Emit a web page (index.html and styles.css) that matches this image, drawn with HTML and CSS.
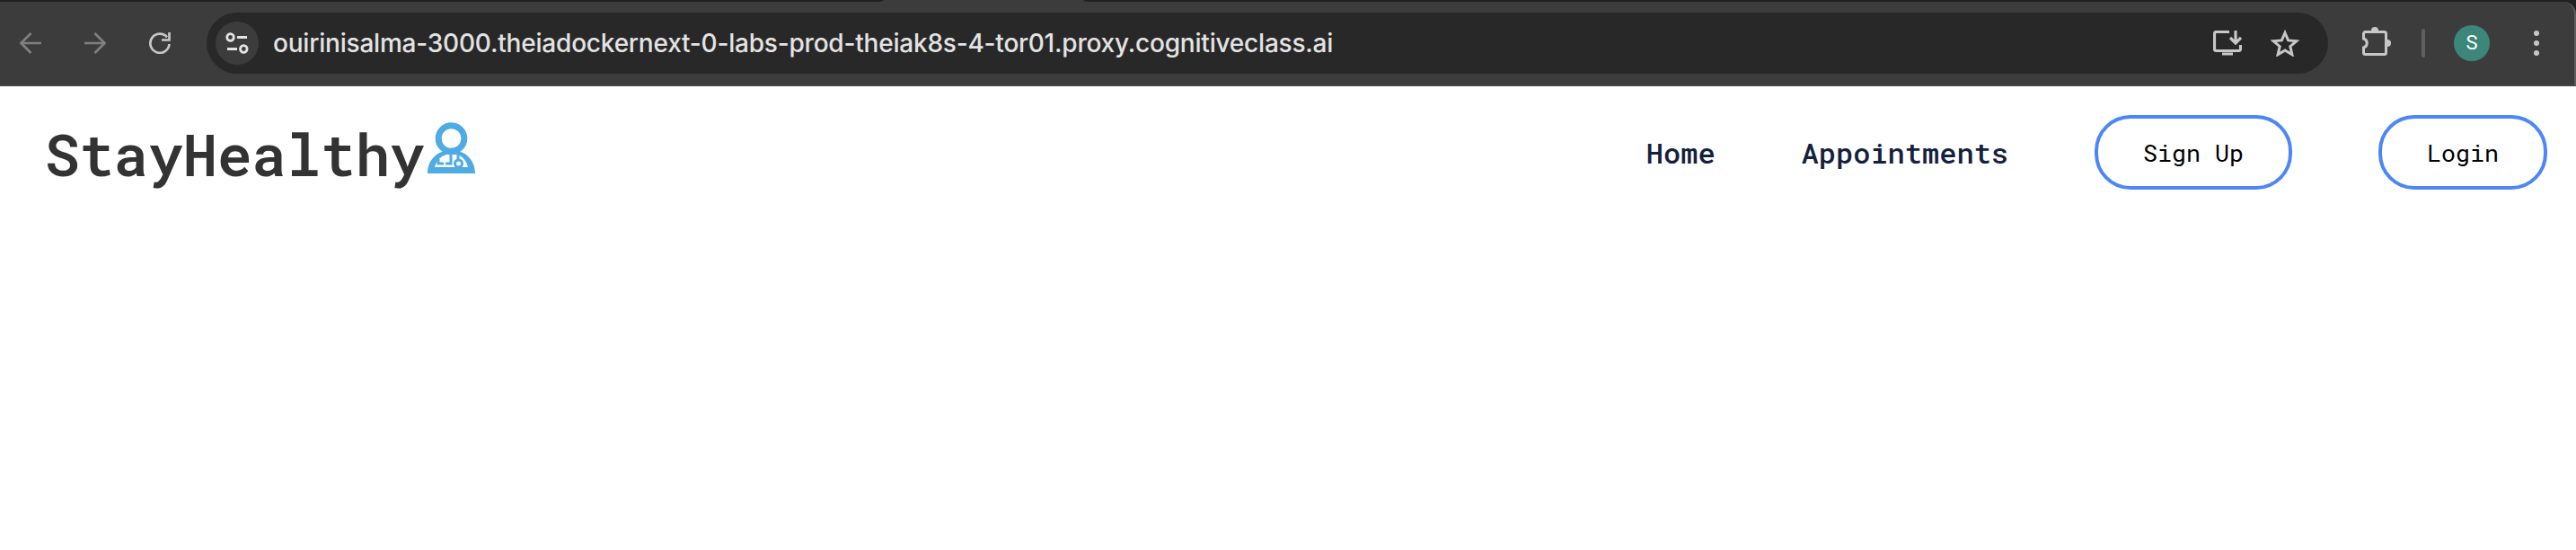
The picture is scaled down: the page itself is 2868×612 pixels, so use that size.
FILE: index.html
```html
<!DOCTYPE html>
<html lang="en">
<head>
<meta charset="utf-8">
<title>StayHealthy</title>
<link rel="stylesheet" href="styles.css">
</head>
<body>
<div class="browser">
<div class="tabstrip"><span class="tab-left"></span><span class="tab-right"></span></div>
<div class="toolbar">
  <div class="controls">
    <svg class="nav-icon dim" viewBox="0 0 24 24"><path d="M24 12H2M12.500 1L1.500 12l11 11"/></svg>
    <svg class="nav-icon dim" viewBox="0 0 24 24"><path d="M0 12h22M11.500 1l11 11l-11 11"/></svg>
    <svg class="nav-icon" viewBox="0 0 24 24"><path d="M22.500 13A10.600 10.600 0 1 1 20 5.300M22.500 0v8.500H14"/></svg>
  </div>
  <div class="address">
    <span class="site"><svg width="26" height="24" viewBox="0 0 26 24"><circle cx="5.500" cy="5.500" r="3.800"/><path d="M13 5.500h11M2 18.500h11"/><circle cx="20.300" cy="18.500" r="3.800"/></svg></span>
    <span class="url">ouirinisalma-3000.theiadockernext-0-labs-prod-theiak8s-4-tor01.proxy.cognitiveclass.ai</span>
    <svg class="install" width="32" height="28" viewBox="0 0 32 28"><path d="M18 1.500H3.500a2 2 0 0 0-2 2v17a2 2 0 0 0 2 2h25a2 2 0 0 0 2-2V16M25 0v14M19 8l6 6l6-6M10 26h12"/></svg>
    <svg class="star" width="32" height="30" viewBox="0 0 32 30"><path d="M16 3.500l3.600 8.400l9.200.8l-7 6l2.100 9L16 23l-7.900 4.700l2.100-9l-7-6l9.200-.8z"/></svg>
  </div>
  <svg class="ext" width="34" height="34" viewBox="0 0 34 34"><path class="line" d="M5.500 4.500h21a2 2 0 0 1 2 2v21a2 2 0 0 1-2 2h-21a2 2 0 0 1-2-2V22a5.200 5.200 0 0 0 0-10V6.500a2 2 0 0 1 2-2z"/><path class="fill" d="M12 4V3a4 4 0 0 1 8 0v1zM29 13h1a4 4 0 0 1 0 8h-1z"/></svg>
  <span class="divider"></span>
  <span class="avatar">S</span>
  <span class="menu"><i></i><i></i><i></i></span>
</div>
</div>
<header class="navbar">
  <a class="logo"><span>StayHealthy</span>
    <svg width="54" height="57" viewBox="0 0 54 57"><circle class="head" cx="26.500" cy="18" r="14.300"/><path class="body" fill-rule="evenodd" d="M0 57C0 42 11 31 26.500 31S53 42 53 57zM8 50H45C43 42 38 37 32 36H21C14 38 10 43 8 50z"/><path class="steth" d="M26 36v10h-6M18 46h-6v-5M34 35v7"/><circle class="scope" cx="34.500" cy="46" r="4"/></svg>
  </a>
  <nav class="links">
    <a>Home</a><a>Appointments</a><button>Sign Up</button><button>Login</button>
  </nav>
</header>
</body>
</html>
```
FILE: styles.css
```css
* { box-sizing: border-box; }
body { margin: 0; height: 612px; background: #fff; font-family: "Roboto Mono", "DejaVu Sans Mono", monospace; overflow: hidden; }
.browser { background: #202020; }
.tabstrip { height: 2px; background: #3c3c3c; display: flex; justify-content: space-between; }
.tab-left { width: 984px; background: #202020; border-bottom-right-radius: 8px 2px; }
.tab-right { width: 1662px; background: #202020; border-bottom-left-radius: 8px 2px; }
.toolbar { height: 94px; background: #3c3c3c; border-bottom: 2px solid #464246; border-right: 2px solid #5f5f5f; border-top-right-radius: 14px; display: flex; align-items: center; }
.controls { display: flex; gap: 48px; width: 230px; padding-left: 22px; }
.nav-icon { width: 24px; height: 24px; fill: none; stroke: #c7c7c7; stroke-width: 2.7; }
.dim { stroke: #7f7f7f; }
.address { width: 2362px; height: 68px; border-radius: 34px; background: #282828; display: flex; align-items: center; padding: 0 32px 0 10px; }
.site { width: 48px; height: 48px; border-radius: 50%; background: #3c3c3c; display: flex; align-items: center; justify-content: center; }
.address svg { fill: none; stroke: #c7c7c7; stroke-width: 3; flex: none; }
.address .site svg { stroke: #e3e3e3; stroke-width: 2.800; }
.address .install path { stroke-width: 3.2; }
.url { flex: 1; margin-left: 16px; font: 450 28px/34px Inter, sans-serif; letter-spacing: -0.205px; color: #e3e3e3; white-space: nowrap; }
.install { margin-right: 32px; }
.ext { margin-left: 36px; flex: none; overflow: visible; }
.ext .line { fill: none; stroke: #c7c7c7; stroke-width: 3; }
.ext .fill { fill: #c7c7c7; }
.divider { width: 4px; height: 32px; border-radius: 2px; background: #5f5f5f; margin-left: 34px; }
.avatar { width: 40px; height: 40px; border-radius: 50%; background: #3c877a; color: #fff; font: 22px/40px Roboto, sans-serif; text-align: center; margin-left: 32px; }
.menu { display: flex; flex-direction: column; gap: 5px; margin-left: 49px; }
.menu i { width: 6px; height: 6px; border-radius: 50%; background: #c7c7c7; }
.navbar { height: 147px; display: flex; justify-content: space-between; align-items: center; padding: 0 32px 0 50px; }
.logo { display: flex; align-items: center; font-size: 64px; font-weight: 600; line-height: 84px; color: #333; padding-top: 2px; }
.logo svg { margin-left: 4px; margin-bottom: 12px; }
.head { fill: none; stroke: #4eabe3; stroke-width: 7; }
.body { fill: #4eabe3; }
.steth, .scope { fill: none; stroke: #4eabe3; stroke-width: 3; }
.links { display: flex; align-items: center; gap: 96px; font-size: 32px; font-weight: 500; color: #14213d; }
.links button { font: 400 26.667px/35px "Roboto Mono", "DejaVu Sans Mono", monospace; color: #000; background: #fff; border: 4px solid #4d86f7; border-radius: 40px; height: 83px; padding: 0 50px; }
```
